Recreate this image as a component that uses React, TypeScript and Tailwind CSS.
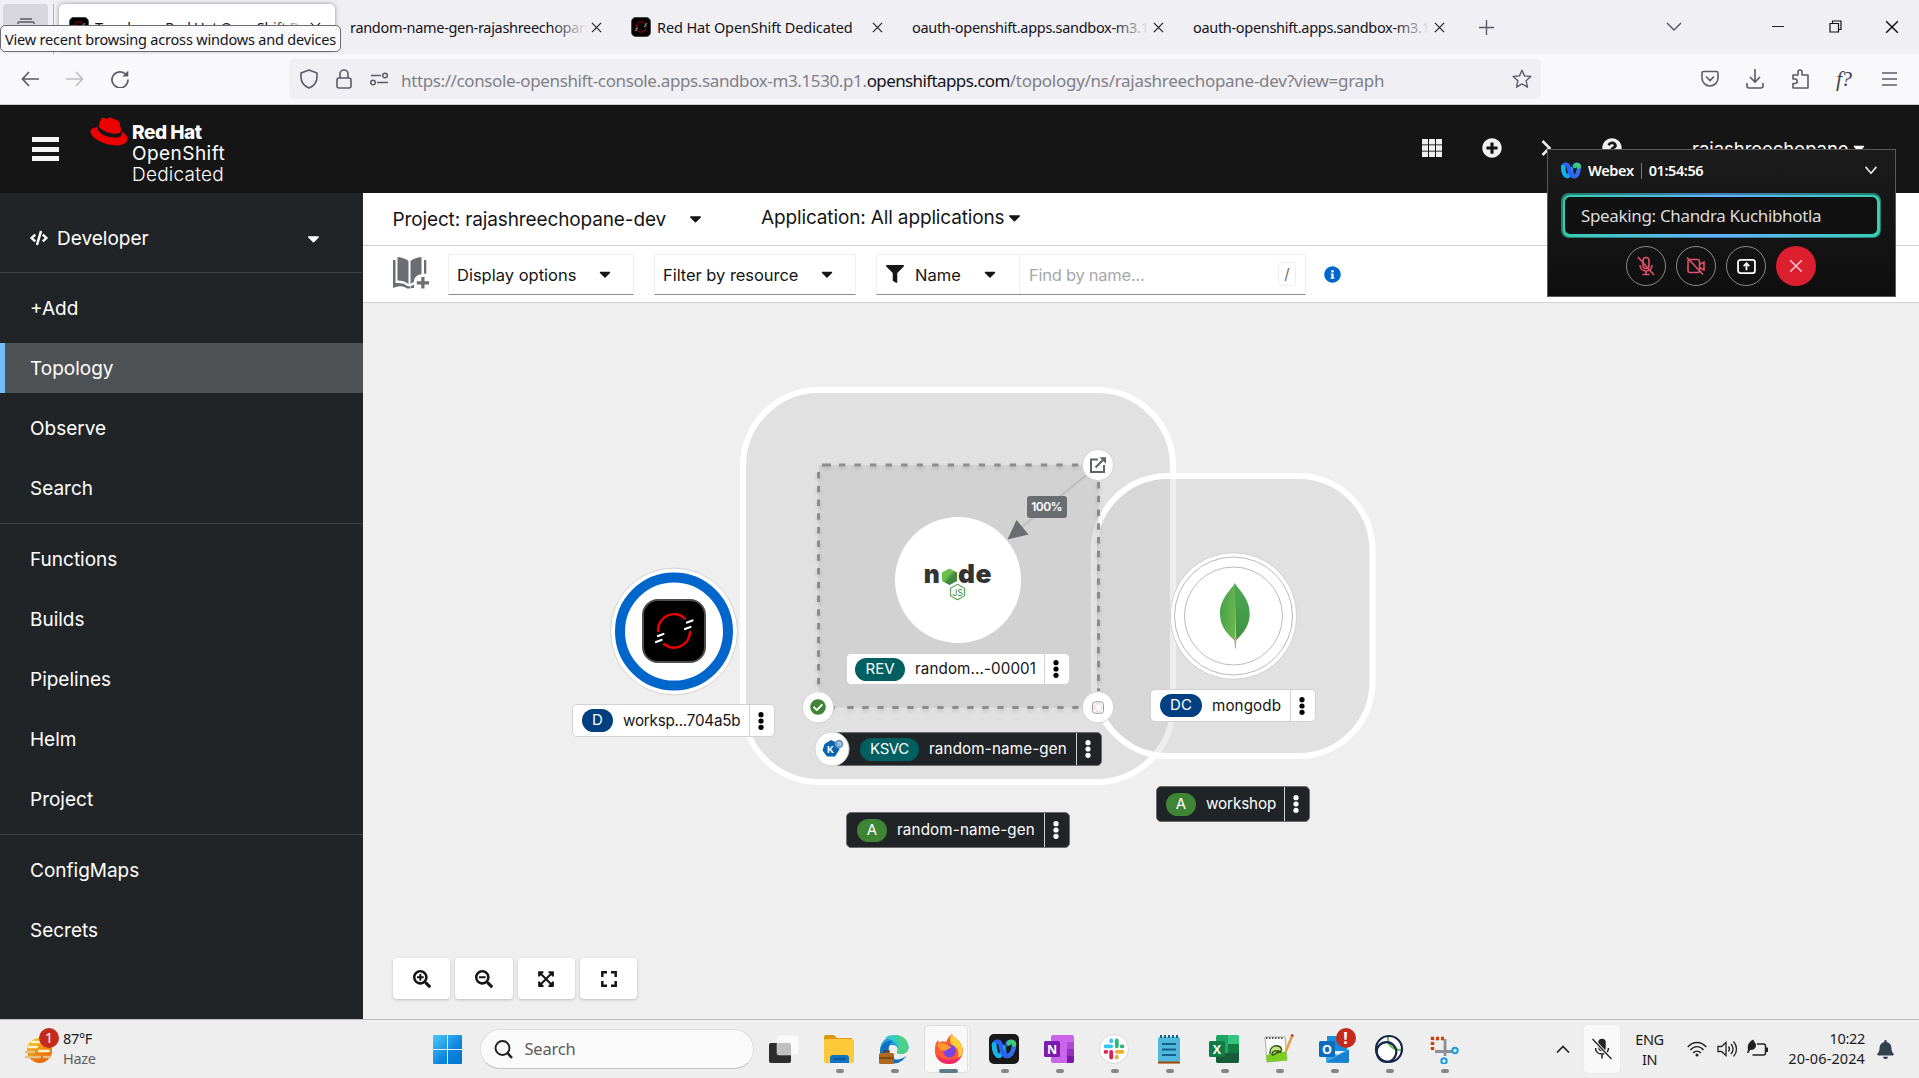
import React from 'react';
import {
  FaBell,
  FaCaretDown,
  FaCheckCircle,
  FaCode,
  FaExpandArrowsAlt,
  FaFilter,
  FaInfoCircle,
  FaPlusCircle,
  FaQuestionCircle,
  FaRedhat,
  FaSearchMinus,
  FaSearchPlus,
} from 'react-icons/fa';

const ui = "font-['Noto_Sans','Open_Sans',sans-serif]";
const rh = "font-['Inter','Roboto',sans-serif]";

/* ---------- Browser chrome ---------- */

function Cross({ className = '' }: { className?: string }) {
  return (
    <svg viewBox="0 0 12 12" className={className} fill="none" stroke="currentColor" strokeWidth="1.3">
      <path d="M1 1l10 10M11 1L1 11" />
    </svg>
  );
}

function OpenShiftMark({ className = '' }: { className?: string }) {
  return (
    <svg viewBox="0 0 64 64" className={className}>
      <rect x="1" y="1" width="62" height="62" rx="15" fill="#000" stroke="#4d4d4d" strokeWidth="2" />
      <g fill="none" stroke="#e00" strokeWidth="2.4" strokeLinecap="round">
        <path d="M16 32a16 16 0 0 1 27-12.500" />
        <path d="M48 33a16 16 0 0 1-26 12" />
      </g>
      <g stroke="#fff" strokeWidth="2.2" strokeLinecap="round">
        <path d="M45 23.500l5.500-2M43 30l5.500-2M16 37l5.500-2M14 43l5.500-2" />
      </g>
    </svg>
  );
}

function Tab({ title, icon, active, fade = true }: { title: string; icon?: boolean; active?: boolean; fade?: boolean }) {
  return (
    <div className="flex h-full w-[281px] shrink-0 items-start pl-[2px] pr-[3px] pt-1">
      <div
        className={
          'flex h-[46px] w-full items-center rounded-[5px] pl-[10px] pr-[14px] ' +
          (active ? 'bg-white shadow-[0_0_4px_rgba(0,0,0,0.4)]' : '')
        }
      >
        {icon && <OpenShiftMark className="mr-[6px] size-[20px] shrink-0" />}
        <div
          className={
            'relative min-w-0 flex-1 overflow-hidden whitespace-nowrap text-[14.5px] leading-6 text-[#15141a] ' +
            (fade ? 'tracking-[-0.31px]' : 'tracking-[-0.11px]')
          }
        >
          {title}
          {fade && (
            <div
              className={
                'absolute inset-y-0 right-0 w-9 bg-linear-to-r ' +
                (active ? 'from-white/0 to-white' : 'from-[#f0eff4]/0 to-[#f0eff4]')
              }
            />
          )}
        </div>
        <Cross className="ml-1 size-[11px] shrink-0 text-[#222]" />
      </div>
    </div>
  );
}

function TabBar() {
  return (
    <div className={`relative flex h-[54px] bg-[#f0eff4] ${ui}`}>
      <div className="flex w-[57px] pl-[3px] pt-1">
        <div className="flex h-[46px] w-[45px] justify-center rounded bg-[#d7d6dc] pt-[14px]">
          <svg viewBox="0 0 20 18" className="h-[18px] w-5" fill="none" stroke="#5b5b66" strokeWidth="1.5">
            <path d="M4 1h12M2 6V5a1 1 0 0 1 1-1h14a1 1 0 0 1 1 1v1M1 10a2 2 0 0 1 2-2h14a2 2 0 0 1 2 2v7H1z" />
          </svg>
        </div>
        <div className="ml-[5px] h-[50px] w-px bg-[#b5b5bb]" />
      </div>
      <Tab title="Topology · Red Hat OpenShift Dedicated" icon active />
      <Tab title="random-name-gen-rajashreechopane-dev" />
      <Tab title="Red Hat OpenShift Dedicated" icon fade={false} />
      <Tab title="oauth-openshift.apps.sandbox-m3.1530" />
      <Tab title="oauth-openshift.apps.sandbox-m3.1530" />
      <svg viewBox="0 0 14 14" className="ml-[17px] mt-[20px] size-[15px]" stroke="#5b5b66" strokeWidth="1.300">
        <path d="M7 0v14M0 7h14" />
      </svg>
      <div className="flex flex-1 items-center pb-[1px]">
        <svg viewBox="0 0 16 10" className="ml-[172px] h-[10px] w-[16px]" fill="none" stroke="#5b5b66" strokeWidth="1.5">
          <path d="M1 1l7 7 7-7" />
        </svg>
        <div className="ml-[90px] h-[1.5px] w-3 bg-[#222]" />
        <svg viewBox="0 0 13 13" className="ml-[45px] size-[13px]" fill="none" stroke="#111" strokeWidth="1.2">
          <path d="M1 3.500h8.500v8.500h-8.500zM3.500 3.500V1h8.500v8.500h-2.500" />
        </svg>
        <Cross className="ml-[43px] size-[14px] text-[#111]" />
      </div>
      <div className="absolute left-0 top-[25px] z-20 flex h-[27px] w-[341px] items-center rounded-[5px] border border-[#6a6a70] bg-[#f9f9fb] pl-1 pt-[2px] text-[14.5px] tracking-[-0.19px] whitespace-nowrap text-[#15141a]">
        View recent browsing across windows and devices
      </div>
    </div>
  );
}

function NavBar() {
  return (
    <div className={`flex h-[51px] items-center border-b border-[#ccc] bg-[#f9f9fb] ${ui}`}>
      <svg viewBox="0 0 18 16" className="ml-[21px] h-4 w-[18px]" fill="none" stroke="#5b5b66" strokeWidth="1.7">
        <path d="M18 8H1.500M8 1L1.500 8 8 15" />
      </svg>
      <svg viewBox="0 0 18 16" className="ml-[27px] h-4 w-[18px]" fill="none" stroke="#bdbdc3" strokeWidth="1.7">
        <path d="M0 8h16.500M10 1l6.500 7L10 15" />
      </svg>
      <svg viewBox="0 0 18 18" className="ml-[27px] size-[18px]" fill="none" stroke="#5b5b66" strokeWidth="1.700">
        <path d="M15 4.500A8 8 0 1 0 17 9.500" />
        <path d="M17.300 0.500v6h-6z" fill="#5b5b66" stroke="none" />
      </svg>
      <div className="ml-[160px] flex h-10 w-[1252px] items-center rounded-[5px] bg-[#f0eff4]">
        <svg viewBox="0 0 18 20" className="ml-[11px] h-5 w-[18px]" fill="none" stroke="#5b5b66" strokeWidth="1.600">
          <path d="M9 1l8 3v4c0 5-3 9-8 11-5-2-8-6-8-11V4z" strokeLinejoin="round" />
        </svg>
        <svg viewBox="0 0 16 20" className="ml-[18px] h-5 w-4" fill="none" stroke="#5b5b66" strokeWidth="1.600">
          <rect x="1" y="9" width="14" height="10" rx="2" />
          <path d="M4 9V5a4 4 0 0 1 8 0v4" />
        </svg>
        <svg viewBox="0 0 20 14" className="ml-[17px] h-[14px] w-5" fill="none" stroke="#5b5b66" strokeWidth="1.500">
          <circle cx="16" cy="3.500" r="2.300" />
          <circle cx="4" cy="10.500" r="2.300" />
          <path d="M2 3.500h10M8 10.500h11" />
        </svg>
        <div className="ml-[12px] flex-1 whitespace-nowrap pt-[3px] text-[17px] leading-6 text-[#808086]">
          <span className="tracking-[-0.38px]">https://console-openshift-console.apps.sandbox-m3.1530.p1.</span>
          <span className="tracking-[-0.6px] text-[#15141a]">openshiftapps.com</span>
          <span className="tracking-[-0.28px]">/topology/ns/rajashreechopane-dev?view=graph</span>
        </div>
        <svg viewBox="0 0 20 20" className="mr-[9px] size-5" fill="none" stroke="#5b5b66" strokeWidth="1.400" strokeLinejoin="round">
          <path d="M10 1.200l2.500 5.700 6.300.6-4.700 4.200 1.400 6.500L10 14.900l-5.500 3.300 1.400-6.500L1.200 7.500l6.300-.6z" />
        </svg>
      </div>
      <div className="ml-[160px] flex items-center text-[#5b5b66]">
        <svg viewBox="0 0 18 18" className="size-[18px]" fill="none" stroke="currentColor" strokeWidth="1.600">
          <path d="M2.500 1.500h13a1.500 1.500 0 0 1 1.500 1.500v5a8 8 0 0 1-16 0V3a1.500 1.500 0 0 1 1.500-1.500zM5 6.500l4 4 4-4" />
        </svg>
        <svg viewBox="0 0 18 20" className="ml-[27px] h-5 w-[18px]" fill="none" stroke="currentColor" strokeWidth="1.600">
          <path d="M9 0v12.500M4 8l5 5 5-5M1 14v3a2 2 0 0 0 2 2h12a2 2 0 0 0 2-2v-3" />
        </svg>
        <svg viewBox="0 0 18 20" className="ml-[27px] h-5 w-[18px]" fill="none" stroke="currentColor" strokeWidth="1.600" strokeLinejoin="round">
          <path d="M2 19v-4.500h2a2 2 0 0 0 0-4.500H2V6h5V3a2 2 0 0 1 4 0v3h6v13z" />
        </svg>
        <span className="ml-[27px] w-[22px] font-['Liberation_Serif',serif] text-[22px] leading-5 italic tracking-[-1px] text-[#46464f]">
          f?
        </span>
        <svg viewBox="0 0 15 14" className="ml-[24px] h-[14px] w-[15px]" stroke="currentColor" strokeWidth="1.500">
          <path d="M0 1h15M0 7h15M0 13h15" />
        </svg>
      </div>
    </div>
  );
}

/* ---------- OpenShift console ---------- */

function Masthead() {
  return (
    <div className={`flex h-[88px] bg-[#151515] text-white ${rh}`}>
      <div className="ml-8 mt-[32px] flex h-[24px] w-[27px] flex-col justify-between">
        <div className="h-[5px] bg-[#f5f5f5]" />
        <div className="h-[5px] bg-[#f5f5f5]" />
        <div className="h-[5px] bg-[#f5f5f5]" />
      </div>
      <FaRedhat className="ml-[31px] mt-[8px] h-[37px] w-[38px] text-[#e00]" />
      <div className="ml-[4px] mt-[17px] w-[121px] text-[19px] leading-[21px]">
        <div className="font-extrabold tracking-[-0.45px]">Red Hat</div>
        <div className="tracking-[0.45px]">OpenShift</div>
        <div className="font-light tracking-[0.25px]">Dedicated</div>
      </div>
      <div className="flex h-[86px] flex-1 items-center">
        <svg viewBox="0 0 20 18" className="ml-[1169px] h-[18px] w-5 shrink-0" fill="#f0f0f0">
          {[0, 7, 14].map((x) =>
            [0, 6.3, 12.6].map((y) => <rect key={`${x}-${y}`} x={x} y={y} width="6" height="5.4" />),
          )}
        </svg>
        <FaPlusCircle className="ml-[40px] size-5 shrink-0 text-[#f0f0f0]" />
        <svg viewBox="0 0 20 16" className="ml-[39px] h-4 w-5 shrink-0" fill="none" stroke="#f0f0f0" strokeWidth="2.500">
          <path d="M1.500 1l7 7-7 7M9 15h10" />
        </svg>
        <FaQuestionCircle className="ml-[41px] size-5 shrink-0 text-[#f0f0f0]" />
        <span className="ml-[70px] pt-[3px] text-[18.5px] tracking-[-0.05px]">rajashreechopane</span>
        <FaCaretDown className="ml-[1px] size-[18px]" />
      </div>
    </div>
  );
}

function NavItem({ label, active }: { label: string; active?: boolean }) {
  return (
    <div
      className={
        'flex h-[50px] items-center pt-[2px] text-[19px] text-white ' +
        (active ? 'border-l-5 border-[#73bcf7] bg-[#4f5255] pl-[25px]' : 'pl-[30px]')
      }
    >
      {label}
    </div>
  );
}

function Sidebar() {
  const groups = [
    ['+Add', 'Topology', 'Observe', 'Search'],
    ['Functions', 'Builds', 'Pipelines', 'Helm', 'Project'],
    ['ConfigMaps', 'Secrets'],
  ];
  return (
    <div className={`w-[363px] shrink-0 bg-[#212427] ${rh}`}>
      <div className="flex h-[79px] items-center pl-[30px] pt-[11px] text-[19px] text-white">
        <FaCode className="size-[18px]" />
        <span className="ml-[9px] flex-1 pt-[2px]">Developer</span>
        <FaCaretDown className="mr-[40px] size-[19px]" />
      </div>
      {groups.map((g) => (
        <div key={g[0]} className="flex flex-col gap-[10px] border-t border-[#3c3f42] py-[10px]">
          {g.map((l) => (
            <NavItem key={l} label={l} active={l === 'Topology'} />
          ))}
        </div>
      ))}
    </div>
  );
}

function Select({ label, className }: { label: string; className: string }) {
  return (
    <div className={`flex h-[41px] items-center border border-[#f0f0f0] border-b-[#8a8d90] pl-[8px] ${className}`}>
      <span className="flex-1 pt-[2px]">{label}</span>
      <FaCaretDown className="mr-[19px] size-[18px]" />
    </div>
  );
}

function Toolbar() {
  return (
    <div className={`text-[#151515] ${rh}`}>
      <div className="flex h-[53px] items-center border-b border-[#d2d2d2] bg-white text-[19px]">
        <span className="ml-[29.500px] pt-[2px] tracking-[-0.13px]">Project: rajashreechopane-dev</span>
        <FaCaretDown className="mb-[2px] ml-[20px] size-[19px]" />
        <span className="ml-[56px] pb-[2px] tracking-[-0.14px]">Application: All applications</span>
        <FaCaretDown className="mb-[4px] size-[19px]" />
      </div>
      <div className="flex h-[57px] items-center border-b border-[#d2d2d2] bg-white text-[16.5px]">
        <svg viewBox="0 0 36 32" className="ml-[30px] mb-[2px] h-8 w-9" fill="#6a6e73">
          <path d="M4.500 0c5 .5 8.500 2 11 4v23c-3-2.500-6.500-3.500-11-3.500zM28.500 0c-5 .5-8.500 2-11 4v23c1.500-1.200 2.500-1.800 3.500-2.300 0-4 3-7 7.500-7.400z" />
          <path d="M0 3h2.500v23c5-.5 9 .5 12 3l3 .5v2h-3.500c-4-3-8-3-14-.5zM31 3h2.300v14l-2.300-.5zM18 29l3-1.500v3.500h-3z" />
          <path d="M28.300 20h3.200v4.200h4.500v3.200h-4.500v4.200h-3.200v-4.200h-4.500v-3.200h4.500z" />
        </svg>
        <Select label="Display options" className="ml-[19px] w-[186px]" />
        <Select label="Filter by resource" className="ml-5 w-[202px] tracking-[-0.05px]" />
        <div className="ml-5 flex h-[41px] w-[430px] items-center border border-[#f0f0f0] border-b-[#8a8d90]">
          <FaFilter className="ml-[9px] size-[18px]" />
          <span className="ml-[11px] w-[66px] pt-[2px]">Name</span>
          <FaCaretDown className="size-[18px]" />
          <div className="ml-[20px] h-full w-px bg-[#f0f0f0]" />
          <span className="ml-[9px] flex-1 pt-[2px] tracking-[-0.26px] text-[#a5a8ab]">Find by name...</span>
          <span className="mr-[9px] flex h-6 w-[18px] items-center justify-center rounded-[4px] border border-[#eee] text-[15px] text-[#6a6e73]">
            /
          </span>
        </div>
        <FaInfoCircle className="ml-[18px] size-[17px] text-[#0066cc]" />
      </div>
    </div>
  );
}

function Kebab({ dark }: { dark?: boolean }) {
  return (
    <div className="flex h-full w-[25px] items-center border-l border-[#d2d2d2] pl-[8px]">
      <svg viewBox="0 0 6 18" className="h-[18px] w-[6px]" fill={dark ? '#fff' : '#000'}>
        <circle cx="3" cy="2.700" r="2.600" />
        <circle cx="3" cy="9" r="2.600" />
        <circle cx="3" cy="15.300" r="2.600" />
      </svg>
    </div>
  );
}

interface NodeLabelProps {
  badge: string;
  text: string;
  place: string;
  badgeClass: string;
  textClass?: string;
  dark?: boolean;
}

function NodeLabel({ badge, text, place, badgeClass, textClass = '', dark }: NodeLabelProps) {
  return (
    <div
      className={
        'absolute flex items-center rounded-[5px] border ' +
        (dark ? 'border-[#6a6e73] bg-[#212427] text-white ' : 'border-[#d2d2d2] bg-white text-[#151515] ') +
        place
      }
    >
      <span className={'flex h-[23px] items-center justify-center rounded-full text-[15px] text-white ' + badgeClass}>
        {badge}
      </span>
      <span className={'ml-[10px] flex-1 whitespace-nowrap pt-[1px] text-[15.2px] ' + textClass}>{text}</span>
      <Kebab dark={dark} />
    </div>
  );
}

function TopologyShapes() {
  return (
    <svg viewBox="363 303 1556 716" className="absolute inset-0 h-[716px] w-[1556px]">
      <defs>
        <linearGradient id="hex" x1="0" y1="0" x2="1" y2="1">
          <stop offset="0.4" stopColor="#6cc04a" />
          <stop offset="0.6" stopColor="#3f873f" />
        </linearGradient>
        <linearGradient id="leaf" x1="0" y1="0" x2="1" y2="0.4">
          <stop offset="0" stopColor="#3fa047" />
          <stop offset="1" stopColor="#6ab350" />
        </linearGradient>
        <linearGradient id="leaf2" x1="0" y1="0" x2="0" y2="1">
          <stop offset="0" stopColor="#4caa50" />
          <stop offset="1" stopColor="#3e9142" />
        </linearGradient>
        <filter id="soft" x="-20%" y="-20%" width="140%" height="140%">
          <feDropShadow dx="0" dy="2" stdDeviation="2" floodOpacity="0.16" />
        </filter>
      </defs>

      {/* application groups */}
      <rect x="743" y="390" width="430" height="392" rx="76" fill="#bebebe" fillOpacity="0.28" stroke="#fff" strokeWidth="6.200" />
      <rect x="1094" y="476" width="278.500" height="280" rx="74" fill="#bebebe" fillOpacity="0.28" stroke="#fff" strokeWidth="6.200" />

      {/* knative service */}
      <rect x="818.500" y="465" width="280" height="242.500" fill="#c2c2c2" fillOpacity="0.45" />
      <g stroke="#8a8d90" strokeWidth="3" filter="url(#soft)">
        <path d="M822 465h9" />
        <path d="M839 465h244" strokeDasharray="6.300 9.230" />
        <path d="M832 707.500h3M847.300 707.500h238" strokeDasharray="6.300 8.700" />
        <path d="M818.500 472v215" strokeDasharray="6.500 7.220" />
        <path d="M1098.500 482v212" strokeDasharray="6.500 7.250" />
      </g>

      {/* traffic link */}
      <path d="M1086 475.500L1018 530" stroke="#bbbdbf" strokeWidth="2" />
      <path d="M1007.500 539.500l9-19.500 12 14.500z" fill="#6a6e73" />
      <rect x="1027" y="496" width="40" height="22" rx="3" fill="#6a6e73" />
      <text x="1046.700" y="511" textAnchor="middle" fontFamily="Inter" fontSize="12" fontWeight="600" letterSpacing="-0.500" fill="#fff">
        100%
      </text>

      {/* revision node */}
      <circle cx="958" cy="580" r="63" fill="#fff" />
      <g fontFamily="Inter" fontWeight="900" fontSize="26" fill="#333">
        <text x="923.800" y="583.300" textLength="16" lengthAdjust="spacingAndGlyphs">n</text>
        <text x="958" y="583.300" textLength="17" lengthAdjust="spacingAndGlyphs">d</text>
        <text x="975.500" y="583.300" textLength="16" lengthAdjust="spacingAndGlyphs">e</text>
      </g>
      <path d="M949.500 568.500l7.500 4v8.500l-7.500 4-7.500-4v-8.500z" fill="url(#hex)" />
      <path d="M957.500 584.300l7 4v7.500l-7 4-7-4v-7.500z" fill="#fff" stroke="#5fa350" strokeWidth="1.100" />
      <text x="957.700" y="595.600" textAnchor="middle" fontFamily="Inter" fontSize="8.500" fill="#3f873f">
        JS
      </text>

      {/* workspace node */}
      <circle cx="674" cy="631.500" r="63.500" fill="#fff" stroke="#d2d2d2" />
      <circle cx="674" cy="631.500" r="54" fill="none" stroke="#0066cc" strokeWidth="10" />

      {/* mongodb node */}
      <circle cx="1233.500" cy="616" r="63.300" fill="#fff" stroke="#d2d2d2" />
      <circle cx="1233.500" cy="616" r="59" fill="none" stroke="#b8bbbe" />
      <circle cx="1233.500" cy="616" r="49" fill="none" stroke="#b8bbbe" />
      <path d="M1235 583c-4 7-15 15-15 31 0 14 9 21 15 27z" fill="url(#leaf)" />
      <path d="M1234.700 583c4 7 15 15 15 31 0 14-9 21-14 27z" fill="url(#leaf2)" />
      <path d="M1234 637h2.500l-.5 11.500h-1z" fill="#b8ac98" />

      {/* decorators */}
      <g fill="#fff" stroke="#d2d2d2">
        <circle cx="1098" cy="465" r="15.700" />
        <circle cx="818" cy="707.300" r="15.700" />
        <circle cx="1098" cy="707.300" r="15.700" />
      </g>
      <g fill="none" stroke="#5f6368" strokeWidth="2">
        <path d="M1098 459.500h-7v12.500h13v-7" />
        <path d="M1095.500 467.500l8-8" strokeWidth="2.200" />
      </g>
      <path d="M1099.500 457.200h6.500v6.500z" fill="#5f6368" />
      <rect x="1092.500" y="701.800" width="11" height="11.500" rx="3" fill="none" stroke="#8a8d90" strokeWidth="0.900" />
      <circle cx="1098" cy="707.500" r="3.800" fill="none" stroke="#f4a0a0" strokeWidth="0.900" strokeDasharray="2 1" />
    </svg>
  );
}

function Topology() {
  return (
    <div className={`relative h-[716px] overflow-hidden bg-[#efefef] ${rh}`}>
      <TopologyShapes />
      <OpenShiftMark className="absolute left-[279px] top-[296px] size-16" />
      <FaCheckCircle className="absolute left-[447px] top-[396px] size-4 text-[#3e8635]" />

      <NodeLabel badge="D" text="worksp...704a5b" place="left-[209px] top-[401px] h-[33px] w-[203px]" badgeClass="ml-[9px] w-[31px] bg-[#004080]" textClass="tracking-[-0.22px]" />
      <NodeLabel badge="REV" text="random...-00001" place="left-[483px] top-[350px] h-[32px] w-[224px]" badgeClass="ml-[8px] w-[50px] bg-[#005f60]" textClass="tracking-[0.1px]" />
      <NodeLabel badge="DC" text="mongodb" place="left-[787px] top-[386px] h-[33px] w-[166px]" badgeClass="ml-[9px] w-[42px] bg-[#004080]" textClass="tracking-[0.1px]" />
      <NodeLabel badge="KSVC" text="random-name-gen" place="left-[470px] top-[429px] h-[34px] w-[269px]" badgeClass="ml-[26px] w-[59px] bg-[#005f60] tracking-[-0.4px]" textClass="tracking-[0.15px]" dark />
      <NodeLabel badge="A" text="random-name-gen" place="left-[483px] top-[509px] h-[36px] w-[224px]" badgeClass="ml-[10px] w-[30px] bg-[#3e8635]" textClass="tracking-[0.15px]" dark />
      <NodeLabel badge="A" text="workshop" place="left-[793px] top-[483px] h-[36px] w-[154px]" badgeClass="ml-[9px] w-[30px] bg-[#3e8635]" textClass="tracking-[-0.1px]" dark />

      <svg viewBox="0 0 36 36" className="absolute left-[451px] top-[428px] size-9">
        <circle cx="18" cy="18" r="17" fill="#fff" stroke="#d2d2d2" />
        <path d="M17 9l6.500 3 2 6.500-4.500 7h-8l-4.500-6 2-6.500z" fill="#0865ad" />
        <text x="16.300" y="22" textAnchor="middle" fontFamily="Inter" fontWeight="700" fontSize="9.500" fill="#fff">K</text>
        <circle cx="25" cy="13" r="4.300" fill="#6695ca" />
        <text x="25" y="15.200" textAnchor="middle" fontFamily="Inter" fontWeight="700" fontSize="6" fill="#cfe0f4">n</text>
      </svg>

      <div className="absolute left-[30px] top-[655px] flex gap-[5px] text-[#151515]">
        {[
          <FaSearchPlus key="in" className="size-[18px]" />,
          <FaSearchMinus key="out" className="size-[18px]" />,
          <FaExpandArrowsAlt key="fit" className="size-[18px]" />,
          <svg key="reset" viewBox="0 0 16 16" className="size-4" fill="none" stroke="#151515" strokeWidth="2.500">
            <path d="M1.300 6V1.300H6M10 1.300h4.700V6M14.700 10v4.700H10M6 14.700H1.300V10" />
          </svg>,
        ].map((icon, i) => (
          <div key={i} className="flex h-[41px] w-[57.300px] items-center justify-center rounded-[4px] bg-white shadow-[0_1px_3px_rgba(3,3,3,0.22)]">
            {icon}
          </div>
        ))}
      </div>
    </div>
  );
}

/* ---------- Webex floating panel ---------- */

function WebexMark({ className = '' }: { className?: string }) {
  return (
    <svg viewBox="0 0 24 20" className={className} fill="none" strokeWidth="5" strokeLinecap="round">
      <path d="M16 5c1-3 5.500-3 5.500 1 0 5-2 11-5.500 11-3 0-3.500-6-4-8.500" stroke="#2f6ff0" />
      <path d="M17 4.500c1-2 4.500-2 4.500 1" stroke="#3ccb78" />
      <path d="M2.500 6c0 5 2 11 5 11s3.500-6 4.300-9" stroke="#12a5e8" />
      <path d="M2.800 6.500c-.6-4.500 5-5 6.200-1 .8 3 1.500 11.500 6 11.500" stroke="#2b62f2" />
      <path d="M2.500 5.500c0 3 .6 6 1.600 8.500" stroke="#12b5e8" />
    </svg>
  );
}

function WebexPanel() {
  return (
    <div className={`absolute left-[1547px] top-[149px] z-30 h-[148px] w-[349px] border border-[#5a5a5a] bg-linear-to-b from-[#1b1b1b] to-[#0f0f0f] text-white ${ui}`}>
      <div className="flex h-[41px] items-center pl-[13px]">
        <WebexMark className="h-[17px] w-[20px]" />
        <span className="ml-[7px] text-[14.5px] font-semibold tracking-[-0.35px]">Webex</span>
        <span className="ml-[7px] h-4 w-px bg-[#777]" />
        <span className="ml-[7px] text-[14.5px] font-semibold tracking-[-0.4px]">01:54:56</span>
        <svg viewBox="0 0 14 10" className="ml-auto mr-[17px] h-[9px] w-[14px]" fill="none" stroke="#e5e5e5" strokeWidth="1.800">
          <path d="M1 1l6 7 6-7" />
        </svg>
      </div>
      <div className="ml-[13px] mt-[2px] h-[45px] w-[320px] rounded-[8px] bg-[linear-gradient(90deg,#23806f,#467fb8_50%,#23806f)] p-[1.500px]">
        <div className="h-full rounded-[7px] bg-[linear-gradient(90deg,#36cdb0,#62b2ff_50%,#36cdb0)] p-[2.500px]">
          <div className="flex h-full items-center rounded-[5px] bg-[#111] pl-[16px] text-[17px] tracking-[-0.34px] text-[#dcdcdc]">
            Speaking: Chandra Kuchibhotla
          </div>
        </div>
      </div>
      <div className="ml-[78px] mt-[8px] flex gap-[10px]">
        <div className="flex size-10 items-center justify-center rounded-full border border-[#8a8a8a]">
          <svg viewBox="0 0 18 20" className="h-5 w-[18px]" fill="none" stroke="#e5506a" strokeWidth="1.600">
            <rect x="6" y="1.500" width="6" height="11" rx="3" />
            <path d="M3 9c0 8 12 8 12 0M9 15v3.500M5.500 18.500h7M1 1l16 18" />
          </svg>
        </div>
        <div className="flex size-10 items-center justify-center rounded-full border border-[#8a8a8a]">
          <svg viewBox="0 0 20 18" className="h-[18px] w-5" fill="none" stroke="#e5506a" strokeWidth="1.600">
            <rect x="2" y="2.500" width="11.500" height="13" rx="2" />
            <path d="M13.500 7.500l4.500-2.500v8l-4.500-2.500M1 0.500l16 17" />
          </svg>
        </div>
        <div className="flex size-10 items-center justify-center rounded-full border border-[#8a8a8a]">
          <svg viewBox="0 0 20 16" className="h-[15px] w-[19px]" fill="none" stroke="#fff" strokeWidth="1.900">
            <rect x="1" y="1" width="18" height="14" rx="2.500" />
            <path d="M10 12V5M7 7.500L10 4.500l3 3" />
          </svg>
        </div>
        <div className="flex size-10 items-center justify-center rounded-full bg-[#db1f2e] text-[#ffc9cd]">
          <Cross className="size-[14px]" />
        </div>
      </div>
    </div>
  );
}

/* ---------- Windows taskbar ---------- */

const taskIcons: React.ReactNode[] = [
  <g key="view">
    <rect x="0" y="9" width="22" height="20" rx="2" fill="#2d2d2d" />
    <rect x="8" y="1" width="22" height="20" rx="2" fill="#fff" fillOpacity="0.700" stroke="#ddd" strokeWidth="0.500" />
  </g>,
  <g key="files">
    <path d="M0 3a2 2 0 0 1 2-2h8l3 3h15v8H0z" fill="#dd9a10" />
    <rect x="0" y="5" width="30" height="24" rx="2" fill="#fdc93b" />
    <path d="M6 29v-5a3 3 0 0 1 3-3h13a3 3 0 0 1 3 3v5z" fill="#1273c4" />
    <path d="M10 25h11" stroke="#0b4a85" strokeWidth="1.500" />
  </g>,
  <g key="edge">
    <path d="M1 15A14.500 14.500 0 0 1 29.500 13c0 5-4 7-8 7-3 0-4-1-3-3 1-3-1-6-5-6-6 0-10 3-12.500 8z" fill="#1f9fdc" />
    <path d="M6 3.500C16-3 29.500 4 29.500 13c0 5-4 7-8 7-3 0-4-1-3-3 2-5-2-10-12.500-13.500z" fill="#35c9c4" />
    <path d="M17 0.700c7 .8 12.500 5.800 12.500 12.300 0 5-4 7-8 7-3 0-4-1-3-3 2-5 2-11-1.500-16.300z" fill="#4ccf86" />
    <path d="M1 19c0-8 6-13 13-12-3 2-5 6-4 11 1 6 6 9 11 7 2-.5 4-1.500 6-3-2 4-7 7.500-12 7.500C8 29.500 2 26 1 19z" fill="#0f6fc0" />
    <rect x="0" y="19" width="15" height="11" rx="1.500" fill="#b0691c" />
    <path d="M0 24h15M5 19v-2h5v2" stroke="#6d3c0c" strokeWidth="1.300" fill="none" />
  </g>,
  <g key="firefox">
    <path d="M18 0c1 3 8 6 10 12 3 9-3 18-13 18C6 30 0 24 1 15c0-4 1-7 3-9l1 3c2-2 5-2 7-1 2-4 3-6 6-8z" fill="#ff5a36" />
    <path d="M18 0c1 3 8 6 10 12 1 5 0 10-4 14 2-8-1-14-6-15-3-4-2-8 0-11z" fill="#ffcf37" />
    <path d="M2 20c3 7 8 10 13 10 6 0 10-3 12-8-5 5-18 6-25-2z" fill="#f0266f" />
    <circle cx="15.500" cy="17" r="6.500" fill="#7b45e6" />
    <path d="M3 10c4-2 8-1 10 1 2 1 4 1 4 2-1 2-4 2-6 4-4 0-7-3-8-7z" fill="#ff9a2e" />
  </g>,
  <g key="webex">
    <rect x="0" y="0" width="30" height="30" rx="5" fill="#191919" />
    <g transform="translate(2.500 5)" fill="none" strokeWidth="4.500" strokeLinecap="round">
      <path d="M16 5c1-3 6.500-3 6.500 1 0 5-3 11-6.500 11-3 0-3.500-6-4-8.500" stroke="#2f6ff0" />
      <path d="M17.500 4.200c1-2 5-2 5 1.300" stroke="#3ccb78" />
      <path d="M2.500 6c0 5 2 11 5 11s3.500-6 4.300-9" stroke="#12b5e8" />
      <path d="M2.800 6.500c-.6-4.500 5-5 6.200-1 .8 3 1.500 11.500 6 11.500" stroke="#2b62f2" />
      <path d="M2.500 5.500c0 3 .6 6 1.600 8.500" stroke="#12b5e8" />
    </g>
  </g>,
  <g key="onenote">
    <rect x="7" y="1" width="23" height="28" rx="2" fill="#ca64ea" />
    <path d="M23 8h7v7h-7z" fill="#ae4bd5" />
    <path d="M23 15h7v7h-7z" fill="#9332bf" />
    <path d="M23 22h7v5a2 2 0 0 1-2 2h-5z" fill="#7719aa" />
    <rect x="0" y="7" width="16" height="16" rx="1.500" fill="#7a1bb0" />
    <text x="8" y="19.500" textAnchor="middle" fontFamily="Open Sans" fontWeight="700" fontSize="12.500" fill="#fff">N</text>
  </g>,
  <g key="slack">
    <circle cx="15" cy="15" r="14.500" fill="#fff" stroke="#d8d8d8" />
    <g strokeWidth="3.800" strokeLinecap="round">
      <path d="M12.200 6.500v.8M6.500 12.300h5.700" stroke="#36c5f0" />
      <path d="M17.800 6.500v5.800M23.500 12.300h-.8" stroke="#2eb67d" />
      <path d="M17.800 17.800h5.700M17.800 23.500v-.8" stroke="#ecb22e" />
      <path d="M12.200 17.800v5.700M6.500 17.800h.8" stroke="#e01e5a" />
    </g>
  </g>,
  <g key="notepad">
    <rect x="4" y="3" width="22" height="25" rx="2" fill="#4fb9dd" />
    <path d="M4 28.500h22" stroke="#a04f12" strokeWidth="2.200" />
    <path d="M7 1v3M11 1v3M15 1v3M19 1v3M23 1v3" stroke="#12618a" strokeWidth="2" />
    <path d="M8 10h14M8 15.500h14M8 21h14" stroke="#12618a" strokeWidth="2" />
  </g>,
  <g key="excel">
    <rect x="7" y="1" width="23" height="28" rx="2" fill="#21a366" />
    <path d="M19 1h9a2 2 0 0 1 2 2v7H19z" fill="#33c481" />
    <path d="M7 19h23v8a2 2 0 0 1-2 2H9a2 2 0 0 1-2-2z" fill="#185c37" />
    <path d="M19 10h11v9H19z" fill="#107c41" />
    <rect x="0" y="7" width="16" height="16" rx="1.500" fill="#107c41" />
    <text x="8" y="19.500" textAnchor="middle" fontFamily="Open Sans" fontWeight="700" fontSize="12.500" fill="#fff">X</text>
  </g>,
  <g key="npp">
    <path d="M1 3h20l2 23-20 2z" fill="#fafafa" stroke="#999" strokeWidth="0.800" />
    <path d="M2 21l20-4 1 9.500-20 1.500z" fill="#7bcf1f" />
    <path d="M6 20c-1-6 4-9 8-8s5 5 1 6-7 5-7 2 7-5 9-1" fill="#c3e67c" stroke="#2d4a10" strokeWidth="1.300" />
    <path d="M2 4h18" stroke="#555" strokeWidth="1.800" strokeDasharray="1.500 1.500" />
    <path d="M28 2l-6 15" stroke="#e0a43a" strokeWidth="2.500" />
    <path d="M28.700 0.500l-.8 2" stroke="#b03030" strokeWidth="2.500" />
  </g>,
  <g key="outlook">
    <path d="M8 2h18a2 2 0 0 1 2 2v13H8z" fill="#1490df" />
    <path d="M7 15l11 6 12-6v12a2 2 0 0 1-2 2H9a2 2 0 0 1-2-2z" fill="#35a8ea" />
    <path d="M7 28l23-12v11a2 2 0 0 1-2 2z" fill="#1b7fd0" />
    <rect x="0" y="7" width="16" height="16" rx="1.500" fill="#0f6cbd" />
    <text x="8" y="19.500" textAnchor="middle" fontFamily="Open Sans" fontWeight="700" fontSize="12.500" fill="#fff">O</text>
  </g>,
  <g key="ring" fill="none">
    <circle cx="15" cy="15" r="14.500" fill="#fff" />
    <path d="M14 2c-1 8 4 14 13 14" stroke="#6abf4b" strokeWidth="2" />
    <circle cx="15" cy="15" r="13" stroke="#16264c" strokeWidth="2.200" />
    <circle cx="12.500" cy="18" r="9.800" stroke="#16264c" strokeWidth="2.200" />
  </g>,
  <g key="snip" fill="none">
    <path d="M3.500 16V4.500H16" stroke="#d83b01" strokeWidth="3.400" strokeDasharray="3 2" />
    <path d="M16 5v17M6 17.500h18" stroke="#8a9097" strokeWidth="2.800" />
    <circle cx="26" cy="16.500" r="2.700" stroke="#1b9de2" strokeWidth="2" />
    <circle cx="15" cy="27" r="2.700" stroke="#1b9de2" strokeWidth="2" />
  </g>,
];

function Taskbar() {
  return (
    <div className={`flex h-[59px] items-center border-t border-[#bbb] bg-[#eee] ${ui}`}>
      <div className="flex w-[433px] items-center">
        <svg viewBox="0 0 36 38" className="ml-[24px] mb-[4px] h-[38px] w-9">
          <defs>
            <linearGradient id="sun" x1="0" y1="0" x2="0.500" y2="1">
              <stop offset="0" stopColor="#fccf12" />
              <stop offset="1" stopColor="#e8650d" />
            </linearGradient>
          </defs>
          <circle cx="15.500" cy="22.500" r="12.500" fill="url(#sun)" />
          <path d="M5 19h8M15 23h10M8 14h9" stroke="#fdf3cf" strokeWidth="2.300" strokeLinecap="round" />
          <path d="M2 24h8M2 29h14M20 29h6" stroke="#dfc287" strokeWidth="2.500" strokeLinecap="round" />
          <circle cx="25" cy="10" r="10" fill="#c42b1c" />
          <text x="25" y="15" textAnchor="middle" fontFamily="Noto Sans" fontSize="14" fill="#fff">1</text>
        </svg>
        <div className="mb-[2px] ml-[3px] text-[14.5px] leading-5 tracking-[-0.35px]">
          <div className="text-[#1a1a1a]">87°F</div>
          <div className="text-[#5d5d5d]">Haze</div>
        </div>
      </div>
      <svg viewBox="0 0 29 29" className="size-[29px]">
        <defs>
          <linearGradient id="win" x1="0" y1="0" x2="1" y2="1">
            <stop offset="0" stopColor="#4cc9fb" />
            <stop offset="0.600" stopColor="#0c84dc" />
            <stop offset="1" stopColor="#0073d0" />
          </linearGradient>
        </defs>
        <path d="M1 0h13v14H0V1a1 1 0 0 1 1-1zM15 0h13a1 1 0 0 1 1 1v13H15zM0 15h14v14H1a1 1 0 0 1-1-1zM15 15h14v13a1 1 0 0 1-1 1H15z" fill="url(#win)" />
      </svg>
      <div className="ml-[17.500px] flex h-10 w-[274px] items-center rounded-full border border-[#ddd] border-b-[#c5c5c5] bg-[#fafafa] pl-[13px]">
        <svg viewBox="0 0 19 19" className="size-[19px]" fill="none" stroke="#1f1f1f" strokeWidth="1.900">
          <circle cx="8.500" cy="8" r="7" />
          <path d="M13.500 13l4.500 5" strokeWidth="2.500" />
        </svg>
        <span className="ml-[12px] pt-[1px] text-[16.5px] tracking-[-0.2px] text-[#5a5a5a]">Search</span>
      </div>
      <div className="ml-[3px] flex">
        {taskIcons.map((icon, i) => (
          <div key={i} className="relative flex h-12 w-[55px] items-center justify-center">
            {i === 3 && (
              <>
                <div className="absolute left-[6px] top-0 h-12 w-[43px] rounded-[5px] border border-[#e2e2e2] bg-[#f3f3f3]" />
                <div className="absolute left-[2px] top-0 h-12 w-[44px] rounded-[5px] border border-[#dedede] bg-[#f8f8f8]" />
              </>
            )}
            <svg viewBox="0 0 30 30" className="relative h-[30px] w-[30px]">
              {icon}
            </svg>
            {i === 10 && (
              <span className="absolute left-[29px] top-[3px] flex size-5 items-center justify-center rounded-full bg-[#c42b1c] text-[16px] font-bold text-white">
                !
              </span>
            )}
            {i > 0 && (
              <div
                className={
                  'absolute bottom-0 h-1 rounded-full ' + (i === 3 ? 'left-[17px] w-[19px] bg-[#5f7a8c]' : 'left-[24px] w-2 bg-[#868686]')
                }
              />
            )}
          </div>
        ))}
      </div>
      <svg viewBox="0 0 14 8" className="ml-[84px] h-2 w-[14px] shrink-0" fill="none" stroke="#222" strokeWidth="1.700">
        <path d="M1 7.500l6-6 6 6" />
      </svg>
      <div className="ml-[13px] flex h-[50px] w-[38px] shrink-0 items-center justify-center rounded-[5px] border border-[#eaeaea] bg-[#f9f9f9]">
        <svg viewBox="0 0 20 22" className="h-[22px] w-5" fill="none" stroke="#222" strokeWidth="1.500">
          <rect x="7" y="1.500" width="6" height="11" rx="3" fill="#222" />
          <path d="M3.500 10c0 8 13 8 13 0M10 16.500v4" />
          <path d="M0.500 1l19 20" stroke="#f9f9f9" strokeWidth="3" />
          <path d="M0.500 1l19 20" strokeWidth="1.300" />
        </svg>
      </div>
      <div className="ml-[12px] w-[34px] text-center text-[14.5px] leading-[20px] tracking-[-0.35px] text-[#1a1a1a]">
        <div>ENG</div>
        <div>IN</div>
      </div>
      <svg viewBox="0 0 20 16" className="ml-[20px] h-4 w-5 shrink-0" fill="none" stroke="#222" strokeWidth="1.400">
        <path d="M0.800 6c5-6 13.400-6 18.400 0M3.500 9c3.500-4.500 9.500-4.500 13 0M6.200 12c2-2.500 5.600-2.500 7.600 0" />
        <circle cx="10" cy="14" r="1.500" fill="#222" stroke="none" />
      </svg>
      <svg viewBox="0 0 21 18" className="ml-[10px] h-[18px] w-[21px] shrink-0" fill="none" stroke="#222" strokeWidth="1.300">
        <path d="M1 6.500h3.500L9 2.500v13l-4.500-4H1zM11.500 6.500c1.200 1.500 1.200 3.500 0 5M14 4c2.500 3 2.500 7 0 10M16.500 1.500c4 4.500 4 10.500 0 15" />
      </svg>
      <svg viewBox="0 0 21 18" className="ml-[9px] mb-[2px] h-[18px] w-[21px] shrink-0" fill="none" stroke="#222" strokeWidth="1.500">
        <path d="M10 5h6.500a2 2 0 0 1 2 2v7a2 2 0 0 1-2 2h-11" />
        <path d="M19 8.500h2v4.500h-2z" fill="#222" stroke="none" />
        <path d="M1 10.500c-1-4 1-8 5.500-10C6.500 2.500 9.500 4 9 7c-.5 3-3.500 4.500-6 4l-1.500 3H0z" fill="#222" stroke="none" />
      </svg>
      <div className="mb-[2px] ml-auto mr-[12px] text-right text-[14.5px] leading-[20px] text-[#1a1a1a]">
        <div className="tracking-[-0.3px]">10:22</div>
        <div className="tracking-[0.1px]">20-06-2024</div>
      </div>
      <FaBell className="mr-[25px] h-[19px] w-[17px] shrink-0 text-[#33424f]" />
    </div>
  );
}

export default function App() {
  return (
    <div className="relative h-[1078px] w-[1919px] overflow-hidden bg-white">
      <TabBar />
      <NavBar />
      <Masthead />
      <div className="flex h-[826px]">
        <Sidebar />
        <div className="w-[1556px]">
          <Toolbar />
          <Topology />
        </div>
      </div>
      <Taskbar />
      <WebexPanel />
    </div>
  );
}
